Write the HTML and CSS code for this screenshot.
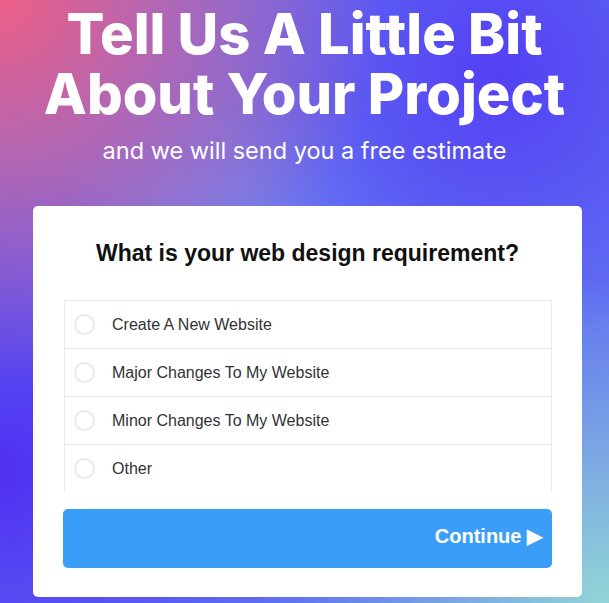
FILE: index.html
```html
<!DOCTYPE html>
<html lang="en">
<head>
  <meta charset="UTF-8" />
  <meta name="viewport" content="width=device-width, initial-scale=1.0"/>
  <title>Project Estimate</title>
  <link rel="stylesheet" href="styles.css">
</head>
<body>
  <header>
    <h1>Tell Us A Little Bit<br>About Your Project</h1>
    <p class="tagline">and we will send you a free estimate</p>
  </header>

  <main class="card">
    <h2>What is your web design requirement?</h2>

    <div class="options">
      <label class="option"><input type="radio" name="req" value="new"><span class="dot"></span>Create A New Website</label>
      <label class="option"><input type="radio" name="req" value="major"><span class="dot"></span>Major Changes To My Website</label>
      <label class="option"><input type="radio" name="req" value="minor"><span class="dot"></span>Minor Changes To My Website</label>
      <label class="option"><input type="radio" name="req" value="other"><span class="dot"></span>Other</label>
    </div>

    <button type="button" class="continue">Continue &#9654;</button>
  </main>
</body>
</html>
```

FILE: styles.css
```css
html, body {
  height: 100%;
}

body {
  margin: 0;
  font-family: 'Liberation Sans', Arial, sans-serif;
  background-color: #6070f2;
  background-image:
    radial-gradient(circle at 0 0, #ec5f86 0, rgba(236,95,134,0) 45%),
    radial-gradient(circle at 100% 100%, #92d6d6 0, rgba(146,214,214,0) 38%),
    radial-gradient(circle at 0 78%, #4f30f2 0, rgba(79,48,242,0) 40%),
    radial-gradient(circle at 82% 12%, #5440f4 0, rgba(84,64,244,0) 38%),
    radial-gradient(circle at 40% 45%, #6c86f4 0, rgba(108,134,244,0) 40%);
  overflow: hidden;
}

header {
  text-align: center;
  color: #fff;
  padding-top: 4px;
}

h1 {
  margin: 0;
  font-family: 'Inter', sans-serif;
  font-weight: 800;
  font-size: 56px;
  line-height: 60px;
}

p.tagline {
  margin: 13px 0 0;
  font-family: 'Inter', sans-serif;
  font-size: 23.5px;
  line-height: 28px;
}

.card {
  width: 549px;
  box-sizing: border-box;
  margin: 41px 0 0 33px;
  background: #fff;
  border-radius: 5px;
  padding: 32px 30px 29px 30px;
}

.card h2 {
  margin: 0 0 32px;
  text-align: center;
  font-size: 23px;
  line-height: 30px;
  color: #111;
}

.options {
  margin: 0 0 18px 1px;
  height: 190px;
  overflow: hidden;
  border: 1px solid #e8e8e8;
  border-bottom: none;
}

.option {
  display: flex;
  align-items: center;
  height: 47px;
  border-bottom: 1px solid #e8e8e8;
  padding-left: 9px;
  font-size: 16px;
  color: #333;
  cursor: pointer;
}

.option input {
  display: none;
}

.dot {
  width: 17px;
  height: 17px;
  border: 2px solid #ebebeb;
  border-radius: 50%;
  margin-right: 17px;
}

.continue {
  display: block;
  width: 100%;
  height: 59px;
  background: #3a9ef8;
  color: #fff;
  border: none;
  border-radius: 5px;
  text-align: right;
  padding: 0 10px 5px 0;
  font-family: 'Liberation Sans', Arial, sans-serif;
  font-weight: bold;
  font-size: 20px;
  cursor: pointer;
}
```
